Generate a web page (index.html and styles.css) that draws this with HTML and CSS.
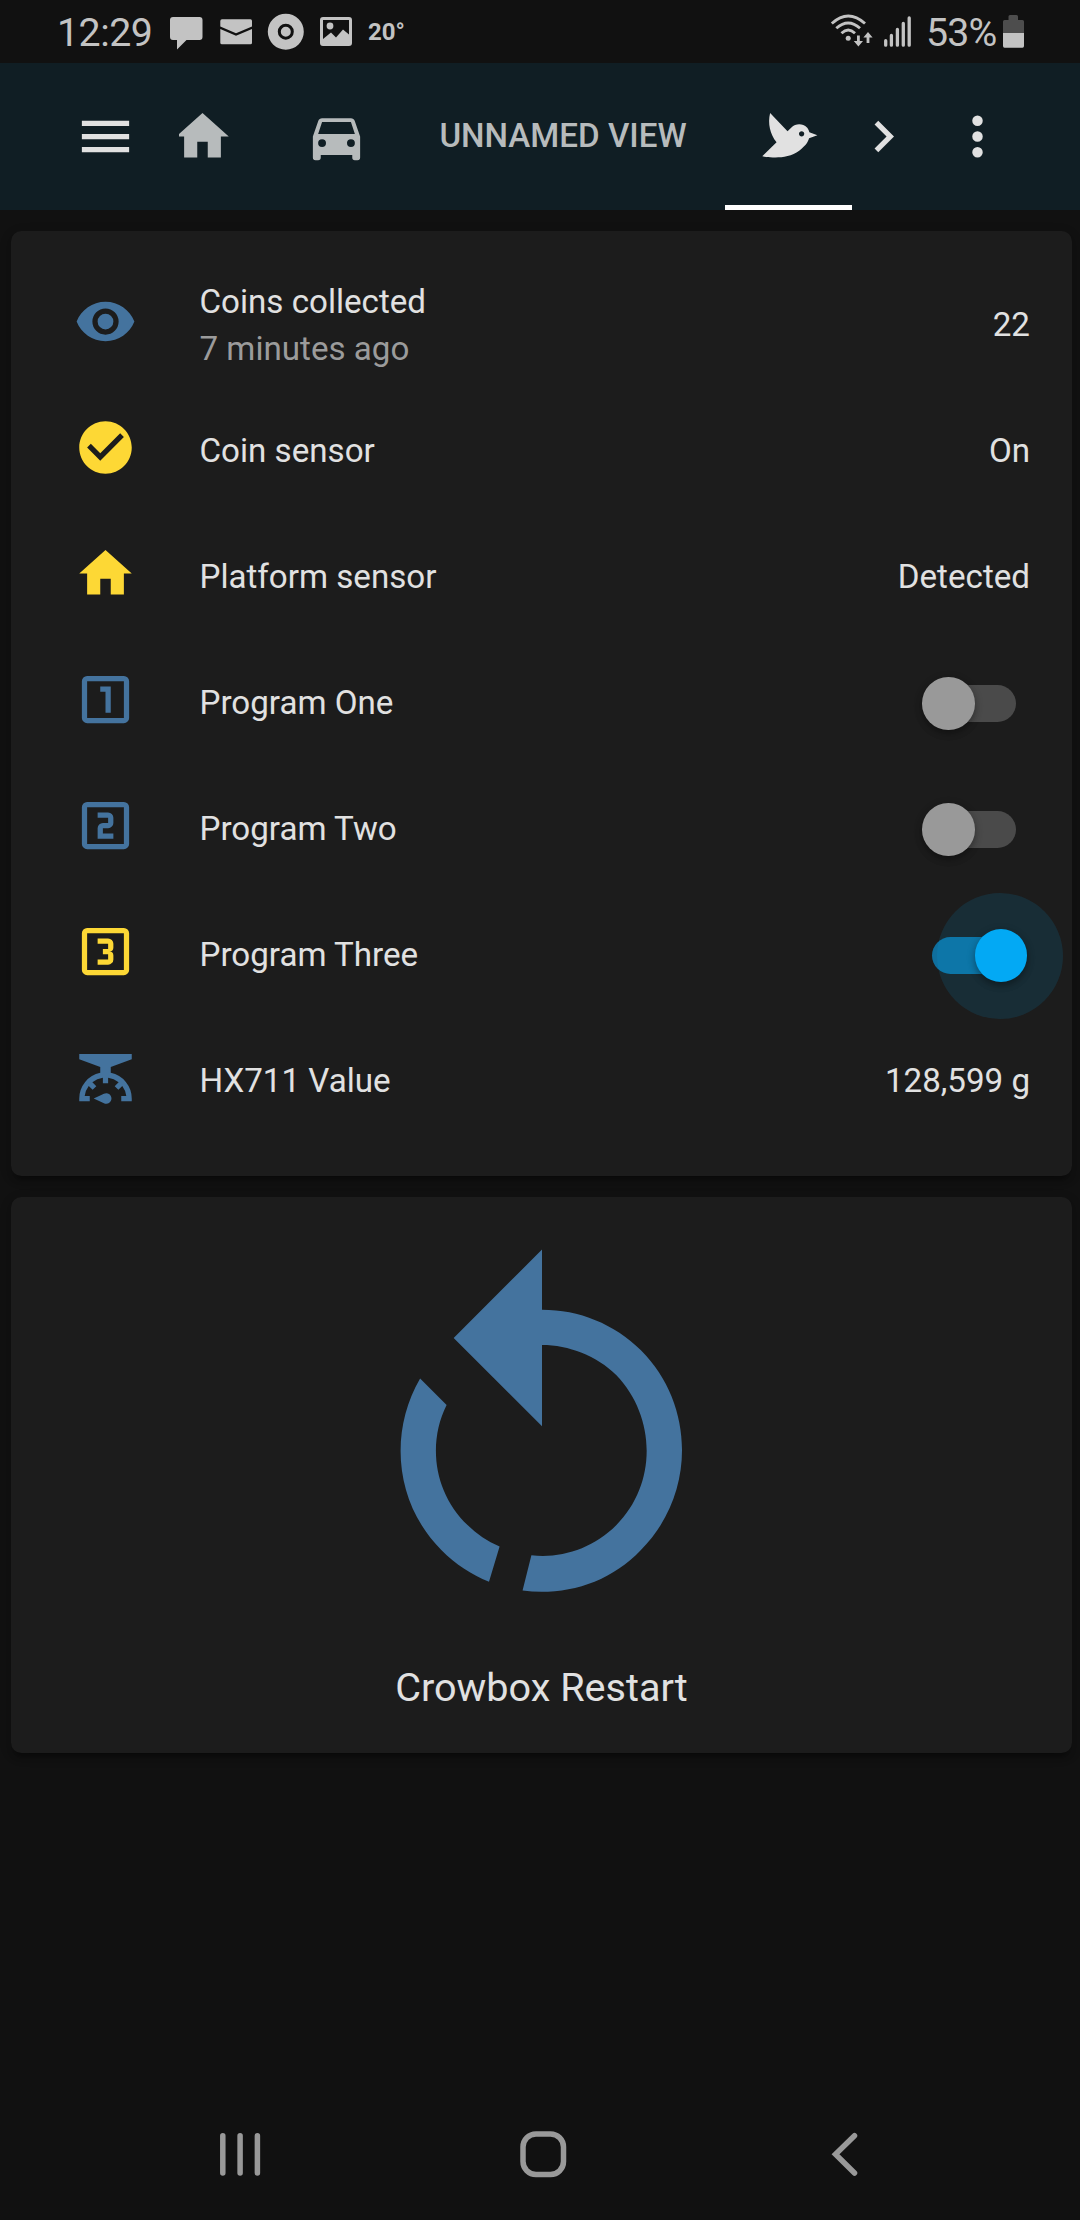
FILE: index.html
```html
<!DOCTYPE html>
<html lang="en">
<head>
<meta charset="utf-8">
<title>Home</title>
<link rel="stylesheet" href="styles.css">
</head>
<body>
<div class="status">
  <span class="clock">12:29</span>
  <svg class="notices" width="186" height="63" viewBox="168 0 186 63">
    <path d="M173 17H199.500A3 3 0 0 1 202.500 20V37A3 3 0 0 1 199.500 40H186.500L177 49.500V40H173A3 3 0 0 1 170 37V20A3 3 0 0 1 173 17Z"/>
    <path d="M222 19.300H250.500Q252 19.300 252 21V26.500L236 33.300L220.300 26.500V21Q220.300 19.300 222 19.300ZM220.300 29L236 35.700L252 29V42.800Q252 44.300 250.500 44.300H222Q220.300 44.300 220.300 42.800Z"/>
    <path fill-rule="evenodd" d="M267.800 31.700a18 18 0 1 0 36 0a18 18 0 1 0 -36 0ZM277.800 31.700a8 8 0 1 1 16 0a8 8 0 1 1 -16 0ZM280.800 31.700a5 5 0 1 0 10 0a5 5 0 1 0 -10 0Z"/>
    <path fill-rule="evenodd" d="M323 17H349Q352 17 352 20V43Q352 46 349 46H323Q320 46 320 43V20Q320 17 323 17ZM323 20V39L331 32.500L336 37.500L343 29.500L349 34.500V20Z"/>
    <circle cx="330" cy="26" r="3.400"/>
  </svg>
  <span class="temp">20°</span>
  <span class="spring"></span>
  <svg class="radio" width="84" height="63" viewBox="830 0 84 63">
    <g fill="none" stroke="#c3c3c3" stroke-width="2.900">
      <path d="M831.800 23.500Q848.200 8.500 865 23.500M836.300 28.300Q848.200 17.500 860 28.300M841.500 33.200Q848.200 27 855 33.200"/>
    </g>
    <circle cx="848.200" cy="38.300" r="2.500"/>
    <path d="M857 35.500H859.800V41H863L858.400 46.500L853.800 41H857ZM866.600 43V37.500H863.400L868 32L872.600 37.500H869.400V43Z"/>
    <g fill="none" stroke="#c3c3c3" stroke-width="3.300" stroke-linecap="round">
      <path d="M885.700 40.700V45.200M891.400 35.500V45.200M897.400 29.500V45.200M903.300 23.500V45.200M909.200 18V45.200"/>
    </g>
  </svg>
  <span class="percent">53%</span>
  <svg class="battery" width="22" height="63" viewBox="1002 0 22 63">
    <path fill="#4d4d4d" d="M1008.500 16.500Q1008.500 15 1010 15H1016.500Q1018 15 1018 16.500V20H1022.500Q1024 20 1024 21.500V33H1003V21.500Q1003 20 1004.500 20H1008.500Z"/>
    <path d="M1003 33H1024V46Q1024 47.700 1022.500 47.700H1004.500Q1003 47.700 1003 46Z"/>
  </svg>
</div>

<header class="toolbar">
  <svg class="icon menu" viewBox="0 0 24 24"><path d="M3,6H21V8H3V6M3,11H21V13H3V11M3,16H21V18H3V16Z"/></svg>
  <nav class="tabs">
    <a class="tab tab-home"><svg class="icon" viewBox="0 0 24 24"><path d="M10,20V14H14V20H19V12H22L12,3L2,12H5V20H10Z"/></svg></a>
    <a class="tab tab-car"><svg class="icon" viewBox="0 0 24 24"><path d="M5,11L6.500,6.500H17.500L19,11M17.500,16A1.500,1.500 0 0,1 16,14.500A1.500,1.500 0 0,1 17.500,13A1.500,1.500 0 0,1 19,14.500A1.500,1.500 0 0,1 17.500,16M6.500,16A1.500,1.500 0 0,1 5,14.500A1.500,1.500 0 0,1 6.500,13A1.500,1.500 0 0,1 8,14.500A1.500,1.500 0 0,1 6.500,16M18.920,6C18.720,5.420 18.160,5 17.500,5H6.500C5.840,5 5.280,5.420 5.080,6L3,12V20A1,1 0 0,0 4,21H5A1,1 0 0,0 6,20V19H18V20A1,1 0 0,0 19,21H20A1,1 0 0,0 21,20V12L18.920,6Z"/></svg></a>
    <a class="tab tab-text">UNNAMED VIEW</a>
    <a class="tab tab-bird active"><svg class="icon" viewBox="0 0 24 24"><path d="M23 11.500L19.950 10.370C19.690 9.220 19.040 8.560 19.040 8.560C17.400 6.920 14.750 6.920 13.110 8.560L11.630 10.040L5 3C4 7 5 11 7.450 14.220L2 19.500C2 19.500 10.890 21.500 16.070 17.450C18.830 15.290 19.450 14.030 19.840 12.700L23 11.500M17.710 11.720C17.320 12.110 16.680 12.110 16.290 11.720C15.900 11.330 15.900 10.700 16.290 10.310C16.680 9.920 17.320 9.920 17.710 10.310C18.100 10.700 18.100 11.330 17.710 11.720Z"/></svg></a>
  </nav>
  <svg class="icon next" viewBox="0 0 24 24"><path d="M8.590,16.580L13.170,12L8.590,7.410L10,6L16,12L10,18L8.590,16.580Z"/></svg>
  <svg class="icon more" viewBox="0 0 24 24"><path d="M12,16A2,2 0 0,1 14,18A2,2 0 0,1 12,20A2,2 0 0,1 10,18A2,2 0 0,1 12,16M12,10A2,2 0 0,1 14,12A2,2 0 0,1 12,14A2,2 0 0,1 10,12A2,2 0 0,1 12,10M12,4A2,2 0 0,1 14,6A2,2 0 0,1 12,8A2,2 0 0,1 10,6A2,2 0 0,1 12,4Z"/></svg>
</header>

<main class="view">
  <section class="card entities">
    <div class="row">
      <svg class="icon" viewBox="0 0 24 24"><path d="M12,9A3,3 0 0,0 9,12A3,3 0 0,0 12,15A3,3 0 0,0 15,12A3,3 0 0,0 12,9M12,17A5,5 0 0,1 7,12A5,5 0 0,1 12,7A5,5 0 0,1 17,12A5,5 0 0,1 12,17M12,4.500C7,4.500 2.730,7.610 1,12C2.730,16.390 7,19.500 12,19.500C17,19.500 21.270,16.390 23,12C21.270,7.610 17,4.500 12,4.500Z"/></svg>
      <div class="name"><div>Coins collected</div><div class="secondary">7 minutes ago</div></div>
      <div class="value">22</div>
    </div>
    <div class="row">
      <svg class="icon on" viewBox="0 0 24 24"><path d="M12 2C6.500 2 2 6.500 2 12S6.500 22 12 22 22 17.500 22 12 17.500 2 12 2M10 17L5 12L6.410 10.590L10 14.170L17.590 6.580L19 8L10 17Z"/></svg>
      <div class="name">Coin sensor</div>
      <div class="value">On</div>
    </div>
    <div class="row">
      <svg class="icon on" viewBox="0 0 24 24"><path d="M10,20V14H14V20H19V12H22L12,3L2,12H5V20H10Z"/></svg>
      <div class="name">Platform sensor</div>
      <div class="value">Detected</div>
    </div>
    <div class="row">
      <svg class="icon" viewBox="0 0 24 24"><rect class="box" x="4" y="4" width="16" height="16" rx="1"/><path d="M12,17H14V7H10V9H12Z"/></svg>
      <div class="name">Program One</div>
      <div class="switch"><span class="thumb"></span></div>
    </div>
    <div class="row">
      <svg class="icon" viewBox="0 0 24 24"><rect class="box" x="4" y="4" width="16" height="16" rx="1"/><path d="M15,15H11V13H13A2,2 0 0,0 15,11V9A2,2 0 0,0 13,7H9V9H13V11H11A2,2 0 0,0 9,13V17H15Z"/></svg>
      <div class="name">Program Two</div>
      <div class="switch"><span class="thumb"></span></div>
    </div>
    <div class="row">
      <svg class="icon on" viewBox="0 0 24 24"><rect class="box" x="4" y="4" width="16" height="16" rx="1"/><path d="M15,15V13.500A1.500,1.500 0 0,0 13.500,12A1.500,1.500 0 0,0 15,10.500V9A2,2 0 0,0 13,7H9V9H13V11H11V13H13V15H9V17H13A2,2 0 0,0 15,15Z"/></svg>
      <div class="name">Program Three</div>
      <div class="switch checked"><span class="ripple"></span><span class="thumb"></span></div>
    </div>
    <div class="row">
      <svg class="icon" viewBox="0 0 24 24"><path d="M2,3H22V5L14,8V10.200A10,10 0 0,1 22,20V21H18V19H19.930A8,8 0 0,0 18.400,15.200L16.900,16.700L15.500,15.300L17,13.800A8,8 0 0,0 13,12.100V14.200H11V12.100A8,8 0 0,0 7,13.800L8.500,15.300L7.100,16.700L5.600,15.200A8,8 0 0,0 4.070,19H6V21H2V20A10,10 0 0,1 10,10.200V8L2,5V3M7.500,20L11.400,18.200A2,2 0 1,1 11.400,21.800L7.500,20Z"/></svg>
      <div class="name">HX711 Value</div>
      <div class="value">128,599 g</div>
    </div>
  </section>

  <section class="card button-card">
    <svg class="restart" viewBox="0 0 24 24"><path d="M12,4C14.100,4 16.100,4.800 17.600,6.300C20.700,9.400 20.700,14.500 17.600,17.600C15.800,19.500 13.300,20.200 10.900,19.900L11.400,17.900C13.100,18.100 14.900,17.500 16.200,16.200C18.500,13.900 18.500,10.100 16.200,7.700C15.100,6.600 13.500,6 12,6V10.600L7,5.600L12,0.600V4M6.300,17.600C3.700,15 3.300,11 5.100,7.900L6.600,9.400C5.500,11.600 5.900,14.400 7.800,16.200C8.300,16.700 8.900,17.100 9.600,17.400L9,19.400C8,19 7.100,18.400 6.300,17.600Z"/></svg>
    <div class="label">Crowbox Restart</div>
  </section>
</main>

<footer class="navbar">
  <svg width="60" height="60" viewBox="0 0 60 60"><path d="M12.800 11.700V49M30.100 11.700V49M47.400 11.700V49"/></svg>
  <svg width="60" height="60" viewBox="0 0 60 60"><rect x="10" y="10" width="40.500" height="40.500" rx="13"/></svg>
  <svg width="60" height="60" viewBox="0 0 60 60"><path d="M39.500 11.700L20.500 30.300L39.500 49"/></svg>
</footer>
</body>
</html>
```
FILE: styles.css
```css
* { box-sizing: border-box; }

body {
  margin: 0;
  width: 1080px;
  height: 2220px;
  overflow: hidden;
  display: flex;
  flex-direction: column;
  background: #111;
  color: #e1e1e1;
  font-family: Roboto, "Noto Sans", sans-serif;
  font-size: 33.15px;
  line-height: 47px;
}

svg { display: block; flex: none; }
.icon { width: 63px; height: 63px; fill: currentColor; }

/* status bar */
.status {
  height: 63px;
  display: flex;
  align-items: center;
  padding: 0 56px 0 57px;
  color: #c3c3c3;
}
.status svg { fill: #c3c3c3; }
.clock, .percent { font-size: 39.3px; line-height: 63px; padding-top: 3px; }
.clock { width: 111px; letter-spacing: -0.5px; }
.temp { font-size: 24px; font-weight: 700; margin-left: 14px; line-height: 60px; }
.spring { flex: 1; }
.percent { width: 76px; margin-left: 12px; letter-spacing: -0.8px; }

/* toolbar */
.toolbar {
  height: 147px;
  display: flex;
  align-items: center;
  background: #101e24;
}
.menu { margin-left: 74px; }
.tabs {
  display: flex;
  align-self: stretch;
  width: 674px;
  margin-left: 42px;
  overflow: hidden;
  color: #b7bbbc;
}
.tab {
  display: flex;
  flex: none;
  align-items: center;
  justify-content: center;
}
.tab-home { width: 126px; margin-left: -40px; }
.tab-car { width: 142px; }
.tab-text { width: 312px; padding-bottom: 2px; font-weight: 500; }
.tab-bird { width: 127px; margin-left: 6px; }
.tab.active { color: #e1e1e1; border-bottom: 5px solid #fff; padding-top: 5px; }
.next { margin-left: -1px; }
.more { margin-left: 31px; }

/* cards */
.view {
  flex: 1;
  display: flex;
  flex-direction: column;
  gap: 21px;
  padding: 21px 8px 0 11px;
}
.card {
  background: #1c1c1c;
  border-radius: 10.5px;
  box-shadow: 0 5px 5px rgba(0, 0, 0, .14), 0 3px 13px rgba(0, 0, 0, .12), 0 8px 3px -5px rgba(0, 0, 0, .2);
}
.entities {
  height: 945px;
  display: flex;
  flex-direction: column;
  gap: 21px;
  padding: 42px;
}
.row { height: 105px; display: flex; align-items: center; }
.row .icon { margin: 0 62.5px 8px 21px; color: #44739e; }
.row .icon.on { color: #fdd835; }
.box { fill: none; stroke: currentColor; stroke-width: 2; }
.name { flex: 1; }
.name, .value { padding-bottom: 2px; }
.secondary { color: #9b9b9b; }

.switch {
  position: relative;
  width: 84px;
  height: 37px;
  margin-right: 14px;
  border-radius: 18.5px;
  background: #4a4a4a;
}
.thumb {
  position: absolute;
  left: -10px;
  top: -8px;
  width: 52.5px;
  height: 52.5px;
  border-radius: 50%;
  background: #999;
  box-shadow: 0 4px 6px rgba(0, 0, 0, .25), 0 2px 10px rgba(0, 0, 0, .15);
}
.checked { background: #0f6f9e; }
.checked .thumb { left: 42.500px; background: #03a9f4; }
.ripple {
  position: absolute;
  left: 5px;
  top: -44.500px;
  width: 126px;
  height: 126px;
  border-radius: 50%;
  background: rgba(3, 169, 244, .12);
}

.button-card {
  height: 556px;
  display: flex;
  flex-direction: column;
  align-items: center;
  padding-top: 42px;
}
.restart { width: 424px; height: 424px; fill: #44739e; }
.label { font-size: 39.6px; line-height: 50px; }

/* system navigation */
.navbar {
  height: 96px;
  margin-bottom: 0;
  padding: 0 205px 0 210px;
  display: flex;
  justify-content: space-between;
}
.navbar svg { fill: none; stroke: #999; stroke-width: 5.500; stroke-linecap: round; }
```
